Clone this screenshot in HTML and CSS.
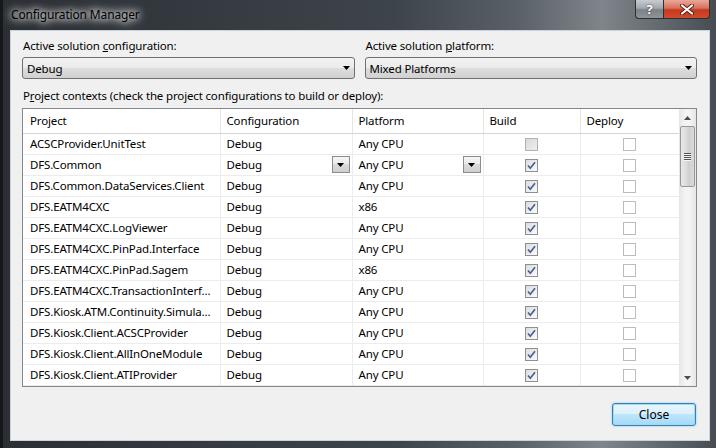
FILE: index.html
```html
<!DOCTYPE html>
<html lang="en">

<head>
    <meta charset="utf-8">
    <title>Configuration Manager</title>
    <link rel="stylesheet" href="styles.css">
</head>

<body>
    <div class="window">
        <div class="titlebar">
            <span class="title">Configuration Manager</span>
            <div class="caption_btns">
                <div class="cap help">?</div>
                <div class="cap close">
                    <svg width="14" height="11" viewBox="0 0 14 11">
                        <path d="M2 1.5 L12 9.5 M12 1.5 L2 9.5" stroke="#5a1d10" stroke-width="4" stroke-linecap="round"/>
                        <path d="M2 1.5 L12 9.5 M12 1.5 L2 9.5" stroke="#fff" stroke-width="2.2" stroke-linecap="round"/>
                    </svg>
                </div>
            </div>
        </div>

        <div class="client">
            <div class="solution_row">
                <div class="field">
                    <div class="lbl">Active solution <u>c</u>onfiguration:</div>
                    <div class="combo">
                        <span>Debug</span>
                        <svg width="7" height="4" viewBox="0 0 7 4"><polygon points="0,0 7,0 3.5,4" fill="#000"/></svg>
                    </div>
                </div>
                <div class="field">
                    <div class="lbl">Active solution <u>p</u>latform:</div>
                    <div class="combo">
                        <span>Mixed Platforms</span>
                        <svg width="7" height="4" viewBox="0 0 7 4"><polygon points="0,0 7,0 3.5,4" fill="#000"/></svg>
                    </div>
                </div>
            </div>

            <div class="lbl contexts">P<u>r</u>oject contexts (check the project configurations to build or deploy):</div>

            <div class="grid">
                <div class="grid_main">
                    <table>
                        <colgroup>
                            <col class="c_project">
                            <col class="c_config">
                            <col class="c_platform">
                            <col class="c_build">
                            <col class="c_deploy">
                        </colgroup>
                        <thead>
                            <tr>
                                <th>Project</th>
                                <th>Configuration</th>
                                <th>Platform</th>
                                <th>Build</th>
                                <th>Deploy</th>
                            </tr>
                        </thead>
                        <tbody id="rows"></tbody>
                    </table>
                </div>
                <div class="scrollbar">
                    <div class="sb_arrow">
                        <svg width="7" height="4" viewBox="0 0 7 4"><polygon points="0,4 7,4 3.5,0" fill="#4d4d4d"/></svg>
                    </div>
                    <div class="sb_thumb">
                        <div class="grip"></div>
                        <div class="grip"></div>
                        <div class="grip"></div>
                        <div class="grip"></div>
                    </div>
                    <div class="sb_track"></div>
                    <div class="sb_arrow">
                        <svg width="7" height="4" viewBox="0 0 7 4"><polygon points="0,0 7,0 3.5,4" fill="#4d4d4d"/></svg>
                    </div>
                </div>
            </div>

            <div class="footer">
                <button class="btn_close">Close</button>
            </div>
        </div>
    </div>

    <script>
        const projekter = [
            ["ACSCProvider.UnitTest", "Any CPU", "grey"],
            ["DFS.Common", "Any CPU", "checked", true],
            ["DFS.Common.DataServices.Client", "Any CPU", "checked"],
            ["DFS.EATM4CXC", "x86", "checked"],
            ["DFS.EATM4CXC.LogViewer", "Any CPU", "checked"],
            ["DFS.EATM4CXC.PinPad.Interface", "Any CPU", "checked"],
            ["DFS.EATM4CXC.PinPad.Sagem", "x86", "checked"],
            ["DFS.EATM4CXC.TransactionInterf...", "Any CPU", "checked"],
            ["DFS.Kiosk.ATM.Continuity.Simula...", "Any CPU", "checked"],
            ["DFS.Kiosk.Client.ACSCProvider", "Any CPU", "checked"],
            ["DFS.Kiosk.Client.AllInOneModule", "Any CPU", "checked"],
            ["DFS.Kiosk.Client.ATIProvider", "Any CPU", "checked"]
        ];

        const dropBtn = '<span class="cell_drop"><svg width="7" height="4" viewBox="0 0 7 4"><polygon points="0,0 7,0 3.5,4" fill="#000"/></svg></span>';
        const check = '<svg width="11" height="11" viewBox="0 0 11 11"><path d="M2 5.5 L4.3 8.2 L9 2.3" fill="none" stroke="#4b5f95" stroke-width="1.7"/></svg>';

        const tbody = document.querySelector("#rows");

        projekter.forEach(p => {
            const tr = document.createElement("tr");
            const drop = p[3] ? dropBtn : "";
            tr.innerHTML =
                `<td>${p[0]}</td>` +
                `<td><div class="cell_flex"><span>Debug</span>${drop}</div></td>` +
                `<td><div class="cell_flex"><span>${p[1]}</span>${drop}</div></td>` +
                `<td class="mid"><span class="box ${p[2]}">${p[2] == "checked" ? check : ""}</span></td>` +
                `<td class="mid"><span class="box off"></span></td>`;
            tbody.appendChild(tr);
        });
    </script>
</body>

</html>
```

FILE: styles.css
```css
* {
    box-sizing: border-box;
}

body {
    margin: 0;
    width: 716px;
    height: 448px;
    overflow: hidden;
    font-family: "Noto Sans", sans-serif;
    font-size: 11.5px;
    letter-spacing: -0.15px;
    color: #000;
    background-color: #1c2024;
}

.window {
    width: 716px;
    height: 448px;
    display: flex;
    flex-direction: column;
    padding: 0 6px 7px 7px;
    background: linear-gradient(90deg, #2b2f34 0%, #363b41 30%, #3e444b 55%, #596067 72%, #7f858a 84%, #636a70 92%, #464c52 100%);
    border-left: 3px solid #15181b;
}

.titlebar {
    height: 30px;
    display: flex;
    justify-content: space-between;
    align-items: flex-start;
    margin-left: -1px;
}

.title {
    padding: 6px 0 0 2px;
    font-size: 12px;
    color: #000;
    text-shadow: 0 0 6px #fff, 0 0 10px rgba(255, 255, 255, 0.9), 0 0 14px rgba(255, 255, 255, 0.7);
}

.caption_btns {
    display: flex;
    height: 19px;
}

.cap {
    display: flex;
    justify-content: center;
    align-items: center;
    border: 1px solid #2c2f33;
    border-top: none;
    height: 19px;
}

.help {
    width: 28px;
    border-radius: 0 0 0 4px;
    border-right: none;
    background: linear-gradient(#c9ccd0 0%, #a3a8ad 45%, #7b8187 55%, #8e949a 100%);
    color: #fff;
    font-weight: bold;
    font-size: 13px;
    text-shadow: 0 0 2px #222;
}

.close {
    width: 47px;
    border-radius: 0 0 4px 0;
    background: linear-gradient(#e9a899 0%, #d8715c 45%, #c4391f 55%, #d24a2c 100%);
}

.client {
    flex: 1;
    background-color: #f0f0f0;
    border: 1px solid #c9d3dc;
    padding: 7px 12px 0 11px;
    display: flex;
    flex-direction: column;
}

.lbl {
    height: 16px;
    line-height: 16px;
    white-space: nowrap;
    padding-left: 1px;
}

.solution_row {
    display: flex;
    gap: 10px;
}

.field {
    flex: 1;
}

.combo {
    margin-top: 3px;
    height: 22px;
    border: 1px solid #707070;
    border-radius: 3px;
    background: linear-gradient(#f3f3f3 0%, #ebebeb 50%, #dddddd 50%, #d1d1d1 100%);
    display: flex;
    justify-content: space-between;
    align-items: center;
    padding: 0 4px 0 4px;
}

.contexts {
    margin-top: 9px;
}

.grid {
    margin-top: 4px;
    height: 279px;
    border: 1px solid #828790;
    background-color: #fff;
    display: flex;
    overflow: hidden;
}

.grid_main {
    flex: 1;
    overflow: hidden;
}

table {
    border-collapse: collapse;
    table-layout: fixed;
    width: 656px;
}

.c_project {
    width: 197px;
}

.c_config {
    width: 132px;
}

.c_platform {
    width: 131px;
}

.c_build {
    width: 97px;
}

.c_deploy {
    width: 99px;
}

th {
    height: 24px;
    font-weight: normal;
    text-align: left;
    padding: 0 0 0 6px;
    border-left: 1px solid #e5e5e5;
    border-bottom: 1px solid #d5d5d5;
}

td {
    height: 21px;
    padding: 0 0 0 6px;
    border-left: 1px solid #ececec;
    border-bottom: 1px solid #ececec;
    white-space: nowrap;
    overflow: hidden;
}

th:first-child,
td:first-child {
    border-left: none;
    padding-left: 7px;
}

.cell_flex {
    display: flex;
    justify-content: space-between;
    align-items: center;
    padding-right: 2px;
}

.cell_drop {
    width: 18px;
    height: 17px;
    border: 1px solid #8c8c8c;
    background: linear-gradient(#f6f6f6 0%, #e9e9e9 50%, #dadada 50%, #d0d0d0 100%);
    display: flex;
    justify-content: center;
    align-items: center;
}

td.mid {
    padding: 0;
    text-align: center;
}

.box {
    display: inline-flex;
    justify-content: center;
    align-items: center;
    width: 13px;
    height: 13px;
    vertical-align: middle;
    border: 1px solid #8e8f8f;
    background: linear-gradient(135deg, #dcdcdc, #fbfbfb);
}

.box.grey {
    border-color: #b1b1b1;
    background: linear-gradient(135deg, #d9d9d9, #efefef);
}

.box.off {
    border-color: #bcbcbc;
    background: #fff;
}

.scrollbar {
    width: 17px;
    display: flex;
    flex-direction: column;
    background: linear-gradient(90deg, #e6e6e6, #f4f4f4 40%, #f4f4f4 60%, #e6e6e6);
}

.sb_arrow {
    height: 17px;
    display: flex;
    justify-content: center;
    align-items: center;
}

.sb_thumb {
    height: 61px;
    margin: 0 1px;
    border: 1px solid #979797;
    border-radius: 2px;
    background: linear-gradient(90deg, #e9e9e9, #dadada 45%, #cfcfcf 55%, #d9d9d9);
    display: flex;
    flex-direction: column;
    justify-content: center;
    align-items: center;
    gap: 1px;
}

.grip {
    width: 7px;
    height: 1px;
    background-color: #4f4f4f;
    box-shadow: 0 1px 0 #f7f7f7;
}

.sb_track {
    flex: 1;
}

.footer {
    display: flex;
    justify-content: flex-end;
    margin-top: 16px;
    padding-right: 1px;
}

.btn_close {
    width: 84px;
    height: 23px;
    font-family: "Noto Sans", sans-serif;
    font-size: 12px;
    color: #000;
    border: 1px solid #3c7fb1;
    border-radius: 3px;
    background: linear-gradient(#eaf6fd 0%, #d9f0fc 50%, #bee6fd 50%, #a7d9f5 100%);
    box-shadow: 0 0 0 1px #9fd9f7 inset, 0 0 2px #61c3f2;
}
```
